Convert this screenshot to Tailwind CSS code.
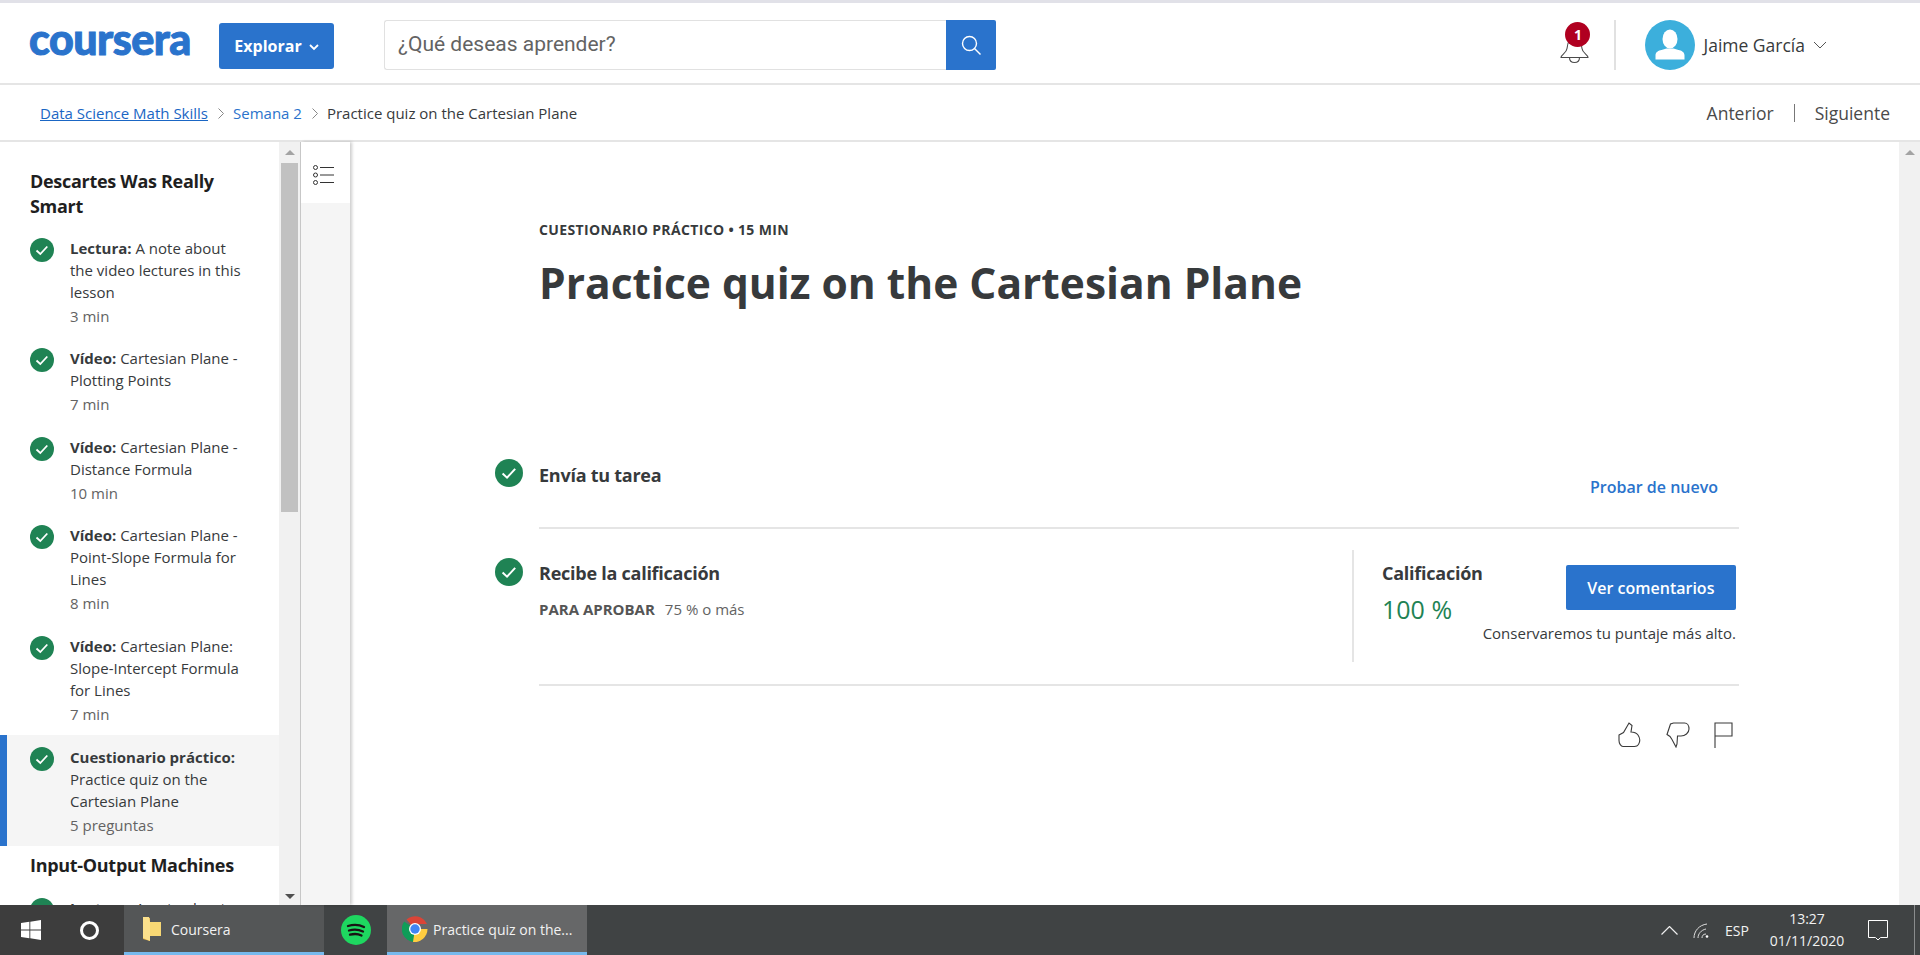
<!DOCTYPE html>
<html lang="es">
<head>
<meta charset="utf-8">
<title>Practice quiz on the Cartesian Plane</title>
<script src="https://cdn.jsdelivr.net/npm/@tailwindcss/browser@4"></script>
</head>
<body class="m-0 bg-white">
<div class="w-[1920px] h-[955px] overflow-hidden flex flex-col bg-white text-[#373a3c] font-['Open_Sans',sans-serif]">
  <div class="h-[4px] shrink-0 bg-white border-t-[3px] border-[#e1e1e8]"></div>
  <!-- header -->
  <header class="h-[81px] shrink-0 border-b-2 border-[#e5e5e5] flex items-center relative">
    <div class="w-[219px] pl-[29px] shrink-0 h-[79px] flex items-center">
      <span class="font-['Lato',sans-serif] font-black text-[43px] leading-none tracking-[-0.5px] text-[#2a73cc] [-webkit-text-stroke:1px_#2a73cc] -mt-[10px]">coursera</span>
    </div>
    <button class="w-[115px] h-[46px] mt-[5px] rounded-[3px] bg-[#2a73cc] text-white font-bold text-[16px] flex items-center justify-center gap-[7px] shrink-0">
      Explorar
      <svg class="mt-[2px]" width="10" height="7" viewBox="0 0 10 7" fill="none" stroke="#fff" stroke-width="1.8"><path d="M1 1l4 4 4-4"/></svg>
    </button>
    <div class="ml-[50px] w-[612px] h-[50px] mt-[3px] flex shrink-0">
      <div class="flex-1 border border-[#e1e1e1] border-r-0 rounded-l-[3px] flex items-center pl-[13px] font-['Roboto',sans-serif] text-[21px] text-[#636363]">¿Qué deseas aprender?</div>
      <div class="w-[50px] bg-[#2a73cc] flex items-center justify-center rounded-r-[2px]">
        <svg width="22" height="22" viewBox="0 0 22 22" fill="none" stroke="#fff" stroke-width="1.4"><circle cx="9.5" cy="9.5" r="7"/><path d="M14.5 14.5l6 6"/></svg>
      </div>
    </div>
    <div class="ml-auto flex items-center h-full pr-[93px] pt-[3px]">
      <div class="relative w-[28px] h-[50px] mr-[26px]">
        <svg class="absolute left-0 top-[10px]" width="29" height="34" viewBox="0 0 29 34" fill="none" stroke="#4a4a4a" stroke-width="1.1"><path d="M1 27.5c0-3 5.5-4 6-9 .6-6 2.5-11 7.500-11s7 5 7.500 11c.5 5 6 6 6 9z"/><path d="M9.500 27.500c0 3 2 5 5 5s5-2 5-5"/></svg>
        <div class="absolute left-[5px] top-[2px] w-[25px] h-[25px] rounded-full bg-[#b00020] text-white text-[14px] leading-[25px] font-bold text-center">1</div>
      </div>
      <div class="w-[2px] h-[50px] bg-[#e1e1e1] mr-[29px]"></div>
      <div class="w-[50px] h-[50px] rounded-full bg-[#3cafdc] mr-[8px] overflow-hidden">
        <svg width="50" height="50" viewBox="0 0 50 50" fill="#fff"><ellipse cx="25" cy="19" rx="7.500" ry="9.500"/><path d="M10.500 39.500v-4c0-3.500 3-5 6-5.500l5-1.500h7l5 1.500c3 .5 6 2 6 5.500v4z"/></svg>
      </div>
      <span class="text-[17.5px] text-[#373a3c]">Jaime García</span>
      <svg class="ml-[8px]" width="14" height="8" viewBox="0 0 14 8" fill="none" stroke="#555" stroke-width="1"><path d="M1 1l6 6 6-6"/></svg>
    </div>
  </header>
  <!-- breadcrumb -->
  <nav class="h-[57px] shrink-0 border-b-2 border-[#e5e5e5] flex items-center pl-[40px] pr-[30px] pt-[1px] text-[15px]">
    <a class="text-[#1a66c4] underline">Data Science Math Skills</a>
    <svg class="ml-[10px] mr-[9px] mt-[1px]" width="6" height="11" viewBox="0 0 6 11" fill="none" stroke="#888" stroke-width="1"><path d="M.5.5l5 5-5 5"/></svg>
    <a class="text-[#2a73cc]">Semana 2</a>
    <svg class="ml-[10px] mr-[9px] mt-[1px]" width="6" height="11" viewBox="0 0 6 11" fill="none" stroke="#888" stroke-width="1"><path d="M.5.5l5 5-5 5"/></svg>
    <span>Practice quiz on the Cartesian Plane</span>
    <div class="ml-auto flex items-center text-[17.5px] text-[#4a4a4a]">
      <span>Anterior</span>
      <span class="w-[1px] h-[18px] bg-[#777] mx-[20px]"></span>
      <span>Siguiente</span>
    </div>
  </nav>
  <!-- body -->
  <div class="flex-1 flex min-h-0">
    <aside class="w-[279px] shrink-0 overflow-hidden">
      <h3 class="pt-[27px] pl-[30px] pr-[40px] text-[18px] leading-[25px] font-bold text-[#1f1f1f] tracking-[-0.3px]">Descartes Was Really Smart</h3>
      <ul class="mt-[7px] text-[15px] leading-[22px] text-[#373a3c]">
        <li class="h-[110px] flex pt-[11px] pl-[30px] gap-[16px]">
          <svg class="mt-[1px] shrink-0" width="24" height="24" viewBox="0 0 24 24"><circle cx="12" cy="12" r="12" fill="#1f8354"/><path d="M6.500 12.500l3.800 3.500 7-7.500" fill="none" stroke="#fff" stroke-width="1.800"/></svg>
          <div class="w-[180px]"><b class="font-bold">Lectura:</b> A note about the video lectures in this lesson<div class="mt-[2px] text-[#636363]">3 min</div></div>
        </li>
        <li class="h-[89px] flex pt-[11px] pl-[30px] gap-[16px]">
          <svg class="mt-[1px] shrink-0" width="24" height="24" viewBox="0 0 24 24"><circle cx="12" cy="12" r="12" fill="#1f8354"/><path d="M6.500 12.500l3.800 3.500 7-7.500" fill="none" stroke="#fff" stroke-width="1.800"/></svg>
          <div class="w-[180px]"><b class="font-bold">Vídeo:</b> Cartesian Plane - Plotting Points<div class="mt-[2px] text-[#636363]">7 min</div></div>
        </li>
        <li class="h-[88px] flex pt-[11px] pl-[30px] gap-[16px]">
          <svg class="mt-[1px] shrink-0" width="24" height="24" viewBox="0 0 24 24"><circle cx="12" cy="12" r="12" fill="#1f8354"/><path d="M6.500 12.500l3.800 3.500 7-7.500" fill="none" stroke="#fff" stroke-width="1.800"/></svg>
          <div class="w-[180px]"><b class="font-bold">Vídeo:</b> Cartesian Plane - Distance Formula<div class="mt-[2px] text-[#636363]">10 min</div></div>
        </li>
        <li class="h-[111px] flex pt-[11px] pl-[30px] gap-[16px]">
          <svg class="mt-[1px] shrink-0" width="24" height="24" viewBox="0 0 24 24"><circle cx="12" cy="12" r="12" fill="#1f8354"/><path d="M6.500 12.500l3.800 3.500 7-7.500" fill="none" stroke="#fff" stroke-width="1.800"/></svg>
          <div class="w-[180px]"><b class="font-bold">Vídeo:</b> Cartesian Plane - Point-Slope Formula for Lines<div class="mt-[2px] text-[#636363]">8 min</div></div>
        </li>
        <li class="h-[111px] flex pt-[11px] pl-[30px] gap-[16px]">
          <svg class="mt-[1px] shrink-0" width="24" height="24" viewBox="0 0 24 24"><circle cx="12" cy="12" r="12" fill="#1f8354"/><path d="M6.500 12.500l3.800 3.500 7-7.500" fill="none" stroke="#fff" stroke-width="1.800"/></svg>
          <div class="w-[180px]"><b class="font-bold">Vídeo:</b> Cartesian Plane: Slope-Intercept Formula for Lines<div class="mt-[2px] text-[#636363]">7 min</div></div>
        </li>
        <li class="h-[111px] flex pt-[11px] pl-[23px] gap-[16px] bg-[#f5f5f5] border-l-[7px] border-[#2a73cc]">
          <svg class="mt-[1px] shrink-0" width="24" height="24" viewBox="0 0 24 24"><circle cx="12" cy="12" r="12" fill="#1f8354"/><path d="M6.500 12.500l3.800 3.500 7-7.500" fill="none" stroke="#fff" stroke-width="1.800"/></svg>
          <div class="w-[180px]"><b class="font-bold">Cuestionario práctico:</b> Practice quiz on the Cartesian Plane<div class="mt-[2px] text-[#636363]">5 preguntas</div></div>
        </li>
      </ul>
      <h3 class="mt-[6px] pl-[30px] text-[18px] leading-[26px] font-bold text-[#1f1f1f] tracking-[-0.3px]">Input-Output Machines</h3>
      <div class="mt-[8px] flex pt-[11px] pl-[30px] gap-[16px] text-[15px] leading-[22px]">
        <svg class="mt-[1px] shrink-0" width="24" height="24" viewBox="0 0 24 24"><circle cx="12" cy="12" r="12" fill="#1f8354"/></svg>
        <div class="w-[180px]"><b class="font-bold">Lectura:</b> A note about</div>
      </div>
    </aside>
    <!-- sidebar scrollbar -->
    <div class="w-[22px] shrink-0 bg-[#f1f1f1] border-r-[1px] border-[#c9c9c9] flex flex-col items-center relative">
      <div class="h-[21px] w-full flex items-center justify-center"><div class="w-0 h-0 border-x-[5px] border-x-transparent border-b-[5px] border-b-[#a3a3a3]"></div></div>
      <div class="w-[17px] h-[349px] bg-[#c1c1c1]"></div>
      <div class="absolute bottom-[0px] h-[17px] w-full flex items-center justify-center"><div class="w-0 h-0 border-x-[5px] border-x-transparent border-t-[5px] border-t-[#505050]"></div></div>
    </div>
    <!-- rail -->
    <div class="w-[49px] shrink-0 bg-[#f5f5f5] shadow-[2px_0_3px_rgba(0,0,0,0.2)] z-10">
      <div class="h-[61px] bg-white pt-[23px] pl-[12px]">
        <svg width="21" height="20" viewBox="0 0 21 20" fill="none" stroke="#333" stroke-width="1"><circle cx="2.500" cy="2.500" r="2"/><circle cx="2.500" cy="10" r="2"/><circle cx="2.500" cy="17.500" r="2"/><path d="M7 2.500h14M7 10h14M7 17.500h14"/></svg>
      </div>
    </div>
    <!-- main -->
    <main class="flex-1 min-w-0 pl-[145px]">
      <div class="pl-[44px] pt-[78px]">
        <div class="text-[14px] leading-[20px] font-bold tracking-[0.35px] text-[#373a3c]">CUESTIONARIO PRÁCTICO • 15 MIN</div>
        <h1 class="mt-[17px] text-[42.5px] leading-[52px] font-bold text-[#373a3c]">Practice quiz on the Cartesian Plane</h1>
      </div>
      <div class="mt-[150px] flex gap-[16px]">
        <svg class="shrink-0" width="28" height="28" viewBox="0 0 24 24"><circle cx="12" cy="12" r="12" fill="#1f8354"/><path d="M6.500 12.500l3.800 3.500 7-7.500" fill="none" stroke="#fff" stroke-width="1.700"/></svg>
        <div class="w-[1200px] h-[70px] border-b-2 border-[#e5e5e5] flex justify-between">
          <div class="pt-[4px] text-[18px] leading-[24px] font-bold tracking-[-0.25px]">Envía tu tarea</div>
          <a class="mt-[17px] mr-[21px] text-[16px] leading-[22px] font-semibold text-[#2a73cc]">Probar de nuevo</a>
        </div>
      </div>
      <div class="flex gap-[16px]">
        <svg class="shrink-0 mt-[29px]" width="28" height="28" viewBox="0 0 24 24"><circle cx="12" cy="12" r="12" fill="#1f8354"/><path d="M6.500 12.500l3.800 3.500 7-7.500" fill="none" stroke="#fff" stroke-width="1.700"/></svg>
        <div class="w-[1200px] h-[157px] border-b-2 border-[#e5e5e5] flex justify-between">
          <div class="pt-[32px]">
            <div class="text-[18px] leading-[24px] font-bold tracking-[-0.25px]">Recibe la calificación</div>
            <div class="mt-[14px] text-[15px] leading-[20px] text-[#636363]"><b class="font-bold text-[#555]">PARA APROBAR</b><span class="ml-[10px]">75 % o más</span></div>
          </div>
          <div class="mt-[21px] w-[387px] h-[112px] border-l-2 border-[#e5e5e5] pl-[28px] pr-[4px] flex justify-between">
            <div class="pt-[11px]">
              <div class="text-[18px] leading-[24px] font-bold tracking-[-0.25px]">Calificación</div>
              <div class="mt-[8px] text-[25px] leading-[32px] text-[#1f8354]">100 %</div>
            </div>
            <div class="pt-[15px] flex flex-col items-end">
              <button class="w-[170px] h-[45px] rounded-[2px] bg-[#2a73cc] text-white text-[16px] font-semibold">Ver comentarios</button>
              <div class="mt-[13px] text-[15px] leading-[20px] whitespace-nowrap">Conservaremos tu puntaje más alto.</div>
            </div>
          </div>
        </div>
      </div>
      <div class="w-[1244px] mt-[36px] pr-[6px] flex justify-end gap-[24px]">
        <svg width="24" height="26" viewBox="0 0 24 26" fill="none" stroke="#3a3a3a" stroke-width="1.100"><path d="M1 13l4.500-2.500 5.500-9.500 3 2.500-1 6.500c3 0 5 .5 7 3 2 3 2 7 .5 9.500-1 1.500-3 2-4 2H5c-2 0-4-3-4-6z"/></svg>
        <svg width="24" height="26" viewBox="0 0 24 26" fill="none" stroke="#3a3a3a" stroke-width="1.100"><path d="M1 12.500l3.500-10.500 3-1h11c3 0 4.500 3 4.500 6 0 4-4 7-8 7h-3.500l-.5 8-1 3-4-7.500-2-3z"/></svg>
        <svg width="19" height="26" viewBox="0 0 19 26" fill="none" stroke="#3a3a3a" stroke-width="1.100"><path d="M1 26V1h17v13H1" /></svg>
      </div>
    </main>
    <!-- main scrollbar -->
    <div class="w-[21px] shrink-0 bg-[#f1f1f1] flex justify-center pt-[8px]">
      <div class="w-0 h-0 border-x-[5px] border-x-transparent border-b-[5px] border-b-[#a3a3a3]"></div>
    </div>
  </div>
  <!-- taskbar -->
  <footer class="h-[50px] shrink-0 bg-[#404344] flex items-stretch text-[#f2f2f2] text-[14px] relative">
    <div class="w-[62px] flex items-center justify-center bg-[#3d3d3d]">
      <svg width="20" height="20" viewBox="0 0 20 20" fill="#fff"><path d="M0 3l8.400-1.200v7.700H0zM9.300 1.700L20 0v9.500H9.300zM0 10.500h8.400v7.700L0 17zM9.300 10.500H20V20L9.300 18.300z"/></svg>
    </div>
    <div class="w-[62px] flex items-center justify-center bg-[#3d3d3d] pr-[7px]">
      <div class="w-[19px] h-[19px] rounded-full border-[3px] border-white"></div>
    </div>
    <div class="w-[200px] bg-[#545657] border-b-[3px] border-[#76b9ed] flex items-center pl-[18px]">
      <svg width="20" height="26" viewBox="0 0 20 26"><path d="M1 1l7 1v23l-7-2z" fill="#e9b949"/><path d="M7 6h12v14H7z" fill="#f7d774"/><path d="M1 1h6l1 5v19l-7-3z" fill="#fbe08c"/></svg>
      <span class="ml-[9px] mt-[2px]">Coursera</span>
    </div>
    <div class="w-[63px] flex items-center justify-center">
      <svg width="30" height="30" viewBox="0 0 30 30" fill="none"><circle cx="15" cy="15" r="15" fill="#1ed760"/><path d="M7 11c6-1.800 11-1.500 16 1M8 15.500c5-1.500 9.500-1.200 14 1M9 19.700c4.500-1.200 8-1 11.500 .8" stroke="#191414" stroke-width="2.300" stroke-linecap="round"/></svg>
    </div>
    <div class="w-[200px] bg-[#666768] border-b-[3px] border-[#76b9ed] flex items-center pl-[15px]">
      <svg width="26" height="26" viewBox="0 0 26 26">
        <path d="M13 13L4.500 3.500A13 13 0 0 1 25 8H13z" fill="#db4437"/>
        <path d="M13 13L2.200 5.500A13 13 0 0 0 11 25.900L17 17z" fill="#0f9d58"/>
        <path d="M13 13h12.500A13 13 0 0 1 11 25.900z" fill="#ffcd40"/>
        <circle cx="13" cy="13" r="6" fill="#fff"/><circle cx="13" cy="13" r="4.700" fill="#4285f4"/>
      </svg>
      <span class="ml-[5px] mt-[2px] whitespace-nowrap">Practice quiz on the...</span>
    </div>
    <div class="ml-auto flex items-center pr-[32px]">
      <svg class="mr-[15px]" width="17" height="9" viewBox="0 0 17 9" fill="none" stroke="#eee" stroke-width="1.200"><path d="M.5 8.500l8-8 8 8"/></svg>
      <svg class="mr-[16px]" width="16" height="15" viewBox="0 0 16 15" fill="none" stroke="#ddd" stroke-width="1"><path d="M1 15C1 8 6 2 14 1M5 15c0-4 3-8 8-9M9 15c0-2 1-4 4-4"/><circle cx="14" cy="13.500" r="1.300" fill="#fff" stroke="none"/></svg>
      <span class="w-[26px] text-[14px] mr-[17px]">ESP</span>
      <div class="w-[78px] text-center text-[14px] leading-[22px] mr-[22px]"><div>13:27</div><div>01/11/2020</div></div>
      <svg width="20" height="21" viewBox="0 0 20 21" fill="none" stroke="#fff" stroke-width="1"><path d="M.5.500h19v17h-7l-2.500 2.500-2.500-2.500h-7z"/></svg>
    </div>
    <div class="absolute right-[5px] top-0 bottom-0 w-[1px] bg-[#8a8c8d]"></div>
  </footer>
</div>
</body>
</html>
